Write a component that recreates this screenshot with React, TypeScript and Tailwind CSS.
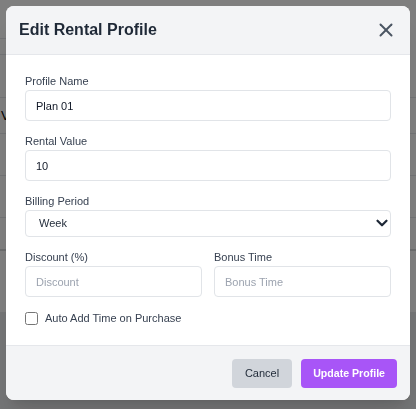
import { X, ChevronDown } from "lucide-react"

const font = { fontFamily: '"Liberation Sans", Arial, sans-serif' }

function Field({ label, children }: { label: string; children: React.ReactNode }) {
  return (
    <div className="flex flex-col">
      <label className="text-[11px] leading-[14px] mb-[2px] text-[#374151]">{label}</label>
      {children}
    </div>
  )
}

const inputCls =
  "h-[31px] w-full rounded-[4px] border border-[#e1e4e8] bg-white px-[10px] text-[11px] text-[#111827] placeholder:text-[#9ca3af] outline-none"

export default function App() {
  return (
    <div className="relative h-[409px] w-[416px] overflow-hidden bg-[#e9eaec]" style={font}>
      {/* page under the overlay */}
      <div className="bg-white">
        <div className="flex h-[97px]">
          <div className="w-[120px] flex flex-col">
            <div className="h-[39px] border-b border-[#e5e7eb]" />
            <div className="h-[16px] border-b border-[#e5e7eb]" />
          </div>
        </div>
        <div className="h-[36px] border-t border-[#e5e7eb] flex items-center pl-[1px] text-[13px] text-black">
          <span>V</span>
        </div>
        <div className="h-[42px] border-t border-[#e5e7eb]" />
        <div className="h-[42px] border-t border-[#e5e7eb]" />
        <div className="h-[32px] border-t border-[#e5e7eb]" />
        <div className="h-[63px] border-t-2 border-[#d6d8db]" />
      </div>

      {/* overlay + modal */}
      <div className="fixed inset-0 bg-black/50 p-[6px]">
        <div className="w-[404px] overflow-hidden rounded-[8px] bg-white shadow-xl">
          <div className="flex h-[49px] items-center justify-between border-b border-[#e5e7eb] bg-[#f3f4f6] pl-[13px] pr-[12px]">
            <h2 className="text-[16px] font-bold text-[#1f2937]">Edit Rental Profile</h2>
            <button className="flex h-[24px] w-[24px] items-center justify-center text-[#4b5563]">
              <X size={22} strokeWidth={2.2} />
            </button>
          </div>

          <div className="flex flex-col gap-[13px] px-[19px] pt-[19px] pb-[20px]">
            <Field label="Profile Name">
              <input className={inputCls} defaultValue="Plan 01" />
            </Field>
            <Field label="Rental Value">
              <input className={inputCls} defaultValue="10" />
            </Field>
            <Field label="Billing Period">
              <div className="relative">
                <select
                  className="h-[27px] w-full appearance-none rounded-[4px] border border-[#e1e4e8] bg-white pl-[13px] text-[11px] text-[#1f2937] outline-none"
                  defaultValue="week"
                >
                  <option value="week">Week</option>
                  <option value="day">Day</option>
                  <option value="month">Month</option>
                </select>
                <ChevronDown
                  size={18}
                  strokeWidth={3}
                  className="pointer-events-none absolute right-0 top-[4px] text-[#1f2937]"
                />
              </div>
            </Field>
            <div className="grid grid-cols-2 gap-[12px]">
              <Field label="Discount (%)">
                <input className={inputCls} placeholder="Discount" />
              </Field>
              <Field label="Bonus Time">
                <input className={inputCls} placeholder="Bonus Time" />
              </Field>
            </div>
            <label className="mt-[1px] flex h-[14px] items-center gap-[7px] text-[11px] text-[#374151]">
              <input type="checkbox" className="m-0 h-[13px] w-[13px]" />
              Auto Add Time on Purchase
            </label>
          </div>

          <div className="flex justify-end gap-[9px] border-t border-[#e5e7eb] bg-[#f3f4f6] px-[13px] pt-[13px] pb-[12px]">
            <button className="h-[29px] rounded-[4px] bg-[#d1d5db] px-[13px] text-[11px] text-[#1f2937]">
              Cancel
            </button>
            <button className="h-[29px] rounded-[4px] bg-[#a855f7] px-[12px] text-[10.6px] font-bold text-white">
              Update Profile
            </button>
          </div>
        </div>
      </div>
    </div>
  )
}
